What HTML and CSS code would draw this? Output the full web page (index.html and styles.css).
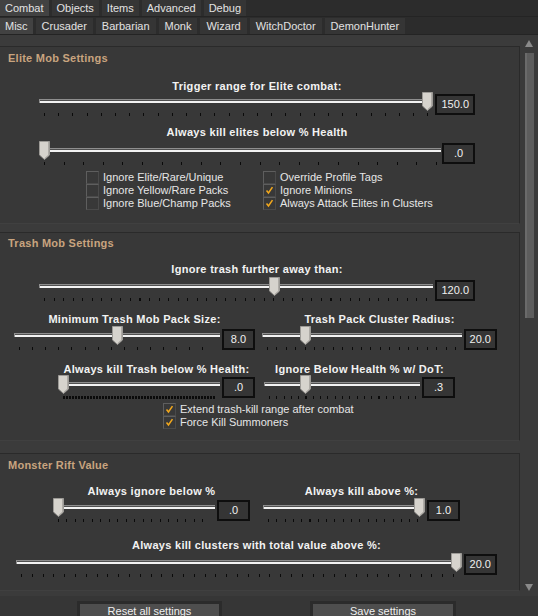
FILE: index.html
```html
<!DOCTYPE html>
<html>
<head>
<meta charset="utf-8">
<title>Combat Settings</title>
<link rel="stylesheet" href="styles.css">
</head>
<body>
<div class="app">
  <nav class="tabs tabs-main">
    <span class="tab active">Combat</span>
    <span class="tab">Objects</span>
    <span class="tab">Items</span>
    <span class="tab">Advanced</span>
    <span class="tab">Debug</span>
  </nav>
  <nav class="tabs tabs-sub">
    <span class="tab active">Misc</span>
    <span class="tab">Crusader</span>
    <span class="tab">Barbarian</span>
    <span class="tab">Monk</span>
    <span class="tab">Wizard</span>
    <span class="tab">WitchDoctor</span>
    <span class="tab">DemonHunter</span>
  </nav>

  <div class="scroll">
    <div class="viewport">

      <section class="group g-elite">
        <h2 class="group-title">Elite Mob Settings</h2>

        <div class="field f-trigger">
          <div class="label">Trigger range for Elite combat:</div>
          <div class="slider-row">
            <div class="slider" style="--p:1;--t:14.2px">
              <div class="track"></div>
              <div class="ticks"></div>
              <svg class="thumb" viewBox="0 0 11 19"><path class="thumb-shape" d="M0.5 0.5H10.5V14L5.5 18.5L0.5 14Z"/><path class="thumb-shade" d="M9.5 1V14L5.5 17.5"/></svg>
            </div>
            <div class="value">150.0</div>
          </div>
        </div>

        <div class="field f-elitehp">
          <div class="label">Always kill elites below % Health</div>
          <div class="slider-row">
            <div class="slider" style="--p:0;--t:19.6px">
              <div class="track"></div>
              <div class="ticks"></div>
              <svg class="thumb" viewBox="0 0 11 19"><path class="thumb-shape" d="M0.5 0.5H10.5V14L5.5 18.5L0.5 14Z"/><path class="thumb-shade" d="M9.5 1V14L5.5 17.5"/></svg>
            </div>
            <div class="value">.0</div>
          </div>
        </div>

        <div class="checks checks-elite">
          <label class="check"><span class="box"></span>Ignore Elite/Rare/Unique</label>
          <label class="check"><span class="box"></span>Override Profile Tags</label>
          <label class="check"><span class="box"></span>Ignore Yellow/Rare Packs</label>
          <label class="check"><span class="box on"><svg viewBox="0 0 13 13"><path d="M3 6.5L5.3 9.5L10 2.5"/></svg></span>Ignore Minions</label>
          <label class="check"><span class="box"></span>Ignore Blue/Champ Packs</label>
          <label class="check"><span class="box on"><svg viewBox="0 0 13 13"><path d="M3 6.5L5.3 9.5L10 2.5"/></svg></span>Always Attack Elites in Clusters</label>
        </div>
      </section>

      <section class="group g-trash">
        <h2 class="group-title">Trash Mob Settings</h2>

        <div class="field f-trashrange">
          <div class="label">Ignore trash further away than:</div>
          <div class="slider-row">
            <div class="slider" style="--p:0.6;--t:9.55px">
              <div class="track"></div>
              <div class="ticks"></div>
              <svg class="thumb" viewBox="0 0 11 19"><path class="thumb-shape" d="M0.5 0.5H10.5V14L5.5 18.5L0.5 14Z"/><path class="thumb-shade" d="M9.5 1V14L5.5 17.5"/></svg>
            </div>
            <div class="value">120.0</div>
          </div>
        </div>

        <div class="pair pair-pack">
          <div class="field f-packsize">
            <div class="label">Minimum Trash Mob Pack Size:</div>
            <div class="slider-row">
              <div class="slider" style="--p:0.5;--t:13.1px">
                <div class="track"></div>
                <div class="ticks"></div>
                <svg class="thumb" viewBox="0 0 11 19"><path class="thumb-shape" d="M0.5 0.5H10.5V14L5.5 18.5L0.5 14Z"/><path class="thumb-shade" d="M9.5 1V14L5.5 17.5"/></svg>
              </div>
              <div class="value">8.0</div>
            </div>
          </div>
          <div class="field f-packradius">
            <div class="label">Trash Pack Cluster Radius:</div>
            <div class="slider-row">
              <div class="slider" style="--p:0.2;--t:9.4px">
                <div class="track"></div>
                <div class="ticks"></div>
                <svg class="thumb" viewBox="0 0 11 19"><path class="thumb-shape" d="M0.5 0.5H10.5V14L5.5 18.5L0.5 14Z"/><path class="thumb-shade" d="M9.5 1V14L5.5 17.5"/></svg>
              </div>
              <div class="value">20.0</div>
            </div>
          </div>
        </div>

        <div class="pair pair-health">
          <div class="field f-trashhp">
            <div class="label">Always kill Trash below % Health:</div>
            <div class="slider-row">
              <div class="slider" style="--p:0;--t:1.5px">
                <div class="track"></div>
                <div class="ticks"></div>
                <svg class="thumb" viewBox="0 0 11 19"><path class="thumb-shape" d="M0.5 0.5H10.5V14L5.5 18.5L0.5 14Z"/><path class="thumb-shade" d="M9.5 1V14L5.5 17.5"/></svg>
              </div>
              <div class="value">.0</div>
            </div>
          </div>
          <div class="field f-dot">
            <div class="label">Ignore Below Health % w/ DoT:</div>
            <div class="slider-row">
              <div class="slider" style="--p:0.25;--t:7.3px">
                <div class="track"></div>
                <div class="ticks"></div>
                <svg class="thumb" viewBox="0 0 11 19"><path class="thumb-shape" d="M0.5 0.5H10.5V14L5.5 18.5L0.5 14Z"/><path class="thumb-shade" d="M9.5 1V14L5.5 17.5"/></svg>
              </div>
              <div class="value">.3</div>
            </div>
          </div>
        </div>

        <div class="checks checks-trash">
          <label class="check"><span class="box on"><svg viewBox="0 0 13 13"><path d="M3 6.5L5.3 9.5L10 2.5"/></svg></span>Extend trash-kill range after combat</label>
          <label class="check"><span class="box on"><svg viewBox="0 0 13 13"><path d="M3 6.5L5.3 9.5L10 2.5"/></svg></span>Force Kill Summoners</label>
        </div>
      </section>

      <section class="group g-rift">
        <h2 class="group-title">Monster Rift Value</h2>

        <div class="pair pair-rift">
          <div class="field f-ignorebelow">
            <div class="label">Always ignore below %</div>
            <div class="slider-row">
              <div class="slider" style="--p:0;--t:8.5px">
                <div class="track"></div>
                <div class="ticks"></div>
                <svg class="thumb" viewBox="0 0 11 19"><path class="thumb-shape" d="M0.5 0.5H10.5V14L5.5 18.5L0.5 14Z"/><path class="thumb-shade" d="M9.5 1V14L5.5 17.5"/></svg>
              </div>
              <div class="value">.0</div>
            </div>
          </div>
          <div class="field f-killabove">
            <div class="label">Always kill above %:</div>
            <div class="slider-row">
              <div class="slider" style="--p:1;--t:8.3px">
                <div class="track"></div>
                <div class="ticks"></div>
                <svg class="thumb" viewBox="0 0 11 19"><path class="thumb-shape" d="M0.5 0.5H10.5V14L5.5 18.5L0.5 14Z"/><path class="thumb-shade" d="M9.5 1V14L5.5 17.5"/></svg>
              </div>
              <div class="value">1.0</div>
            </div>
          </div>
        </div>

        <div class="field f-cluster">
          <div class="label">Always kill clusters with total value above %:</div>
          <div class="slider-row">
            <div class="slider" style="--p:1;--t:10.8px">
              <div class="track"></div>
              <div class="ticks"></div>
              <svg class="thumb" viewBox="0 0 11 19"><path class="thumb-shape" d="M0.5 0.5H10.5V14L5.5 18.5L0.5 14Z"/><path class="thumb-shade" d="M9.5 1V14L5.5 17.5"/></svg>
            </div>
            <div class="value">20.0</div>
          </div>
        </div>
      </section>

      <section class="group g-more"></section>
    </div>

    <div class="scrollbar">
      <svg class="arrow" viewBox="0 0 8 7"><path d="M4 0L8 7H0Z"/></svg>
      <div class="scroll-thumb"></div>
      <svg class="arrow arrow-down" viewBox="0 0 8 7"><path d="M0 0H8L4 7Z"/></svg>
    </div>
  </div>

  <footer class="footer">
    <button class="btn btn-reset">Reset all settings</button>
    <button class="btn btn-save">Save settings</button>
  </footer>
</div>
</body>
</html>
```

FILE: styles.css
```css
* { box-sizing: border-box; margin: 0; padding: 0; }

html, body {
  width: 538px;
  height: 616px;
  overflow: hidden;
  background: #363636;
}

body {
  font: 11px "Liberation Sans", Arial, sans-serif;
  color: #e6e6e6;
}

.app {
  display: flex;
  flex-direction: column;
  height: 616px;
}

/* ---------- tabs ---------- */
.tabs {
  display: flex;
  gap: 3px;
  background: #2c2c2c;
  border-bottom: 1px solid #242424;
}
.tabs-main { height: 17px; }
.tabs-sub { height: 19px; padding-top: 1px; }

.tab {
  padding: 0 5px;
  line-height: 16px;
  height: 16px;
  background: #353535;
  color: #e2e2e2;
  white-space: nowrap;
}
.tabs-sub .tab { padding: 0 6px; }
.tab.active { background: #424242; }
.tabs-sub .tab.active { padding: 0 5px; }

/* ---------- scroll area ---------- */
.scroll {
  display: flex;
  height: 561px;
}

.viewport {
  flex: 1;
  overflow: hidden;
  padding-top: 11px;
  background: #3b3b3b;
}

.group {
  background: #383838;
  border: 1px solid #2a2a2a;
  border-left: 0;
  border-bottom-color: #404040;
  margin-bottom: 8px;
}
.g-elite { padding-bottom: 13px; }
.g-trash { padding-bottom: 11px; margin-bottom: 12px; }
.g-rift { padding-bottom: 12px; }
.g-more { height: 200px; }

.group-title {
  font-size: 11px;
  font-weight: bold;
  letter-spacing: 0.25px;
  line-height: 16px;
  color: #c8a47f;
  padding: 3px 8px 0;
}
.g-trash .group-title { padding-top: 2px; }

/* ---------- fields / sliders ---------- */
.label {
  font-weight: bold;
  letter-spacing: 0.3px;
  line-height: 13px;
  text-align: center;
  color: #f2f2f2;
  white-space: nowrap;
}

.slider-row {
  display: flex;
  align-items: flex-start;
  gap: 2px;
}

.slider {
  position: relative;
  flex: 1;
  height: 25px;
}

.track {
  position: absolute;
  left: 0;
  right: 0;
  top: 7px;
  height: 4px;
  background: linear-gradient(#8e8e8e 0 1px, #505050 1px 2px, #f2f2f2 2px 4px);
  border-left: 1px solid #8e8e8e;
}

.ticks {
  position: absolute;
  left: 5px;
  right: 4px;
  top: 21px;
  height: 3px;
  background: repeating-linear-gradient(to right, #0a0a0a 0 1px, transparent 1px var(--t));
}

.thumb {
  position: absolute;
  top: 0;
  left: calc(var(--p) * (100% - 11px));
  width: 11px;
  height: 19px;
  overflow: visible;
}
.thumb-shape { fill: #d6d3cd; stroke: #9c9a96; stroke-width: 1; }
.thumb-shade { fill: none; stroke: #aeaba6; stroke-width: 1; }

.value {
  min-width: 33px;
  height: 21px;
  padding: 0 4px;
  margin-top: 2px;
  border: 2px solid #0e0e0e;
  background: #353535;
  color: #f0f0f0;
  line-height: 17px;
  text-align: center;
}

/* elite */
.f-trigger { margin: 14px 44px 0 39px; }
.f-trigger .slider-row { margin-top: -1px; }
.f-elitehp { margin: 9px 44px 0 39px; }
.f-elitehp .slider-row { margin-top: 2px; gap: 1px; }

/* trash */
.f-trashrange { margin: 12px 44px 0 39px; }
.f-trashrange .slider-row { margin-top: 1px; }
.f-trashrange .value { margin-top: 3px; }

.pair { display: flex; }
.pair-pack { margin-top: 11px; }
.f-packsize { margin-left: 14px; width: 241px; }
.f-packradius { margin-left: 7px; width: 235px; }
.pair-pack .value { margin-top: 3px; }

.pair-health { margin-top: 12px; }
.pair-health .slider-row { margin-top: -1px; }
.f-trashhp { margin-left: 58px; width: 197px; }
.f-dot { margin-left: 9px; width: 191px; }

/* rift */
.pair-rift { margin-top: 12px; }
.f-ignorebelow { margin-left: 53px; width: 197px; }
.f-killabove { margin-left: 13px; width: 197px; }

.f-cluster { margin: 16px 22px 0 16px; }
.f-cluster .slider-row { margin-top: 1px; }
.f-cluster .value { margin-top: 1px; }

/* ---------- checkboxes ---------- */
.checks { display: grid; }
.checks-elite {
  margin: 5px 0 0 86px;
  grid-template-columns: 177px auto;
}
.checks-trash {
  margin: 3px 0 0 163px;
}

.check {
  display: flex;
  align-items: center;
  gap: 4px;
  height: 13px;
  line-height: 13px;
  color: #e6e6e6;
  white-space: nowrap;
}

.box {
  flex: none;
  width: 13px;
  height: 13px;
  border: 1px solid;
  border-color: #5e5e5e #4a4a4a #4a4a4a #5e5e5e;
  margin-top: -1px;
}
.box svg {
  display: block;
  width: 11px;
  height: 11px;
}
.box path {
  fill: none;
  stroke: #f2a81d;
  stroke-width: 1.8;
}

/* ---------- scrollbar ---------- */
.scrollbar {
  width: 18px;
  flex: none;
  background: #3a3a3a;
  display: flex;
  flex-direction: column;
  align-items: center;
  padding: 5px 0 5px;
}
.arrow {
  width: 8px;
  height: 7px;
  fill: #8a8a8a;
  flex: none;
}
.scroll-thumb {
  margin-top: 6px;
  width: 9px;
  height: 265px;
  background: #5d5d5d;
  border-left: 2px solid #6a6a6a;
}
.arrow-down { margin-top: auto; }

/* ---------- footer ---------- */
.footer {
  flex: 1;
  display: flex;
  gap: 88px;
  padding: 5px 0 0 77px;
  background: #363636;
}
.btn {
  font: 11px "Liberation Sans", Arial, sans-serif;
  color: #f0f0f0;
  height: 20px;
  line-height: 12px;
  border: 3px solid #2b2b2b;
  background: #4e4e4e;
}
.btn-reset { width: 145px; }
.btn-save { width: 146px; }
```
